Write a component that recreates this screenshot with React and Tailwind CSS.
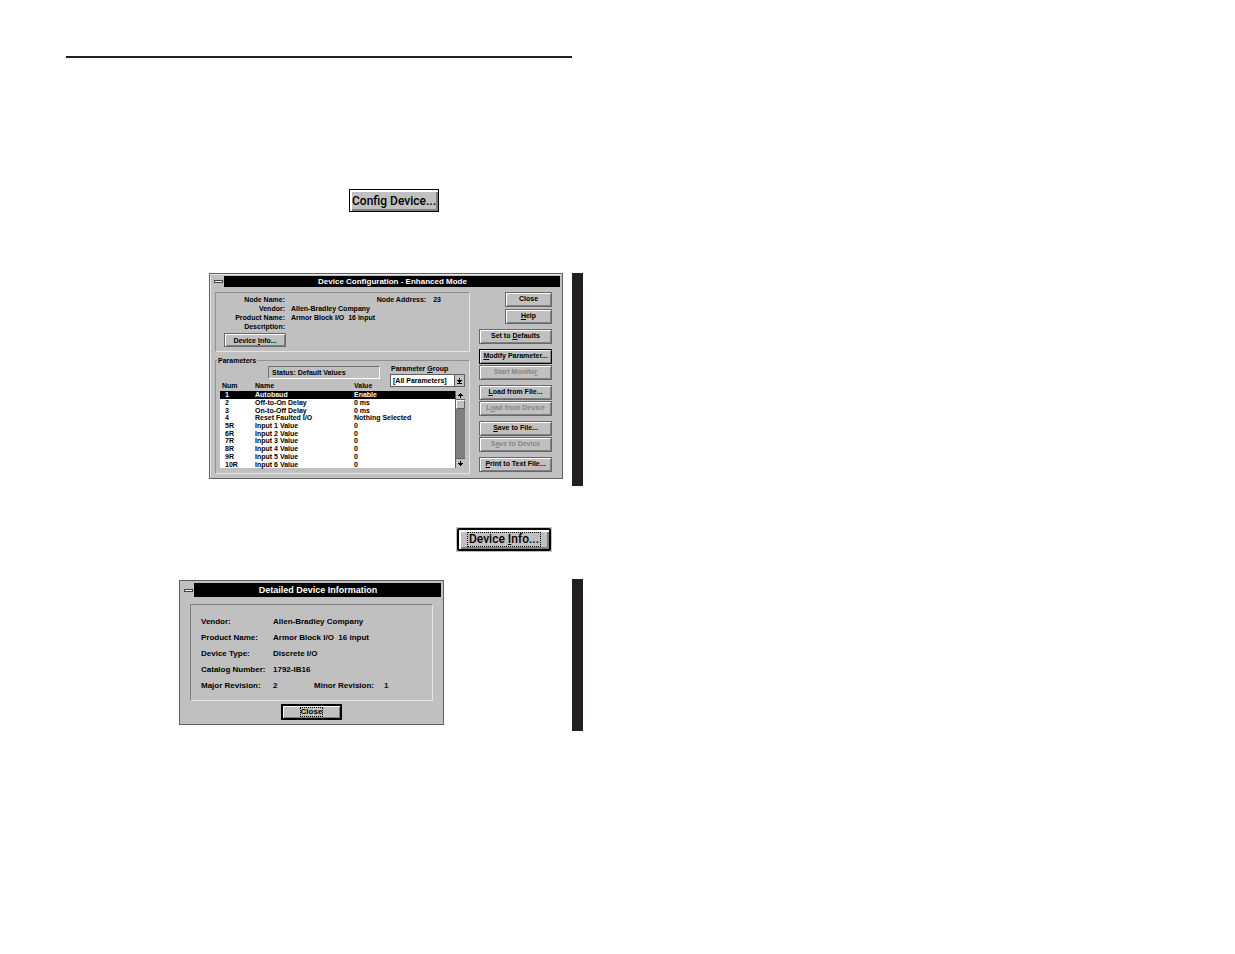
import React from 'react';
import clsx from 'clsx';

const PARAMETERS = [
    { num: '1', name: 'Autobaud', value: 'Enable' },
    { num: '2', name: 'Off-to-On Delay', value: '0 ms' },
    { num: '3', name: 'On-to-Off Delay', value: '0 ms' },
    { num: '4', name: 'Reset Faulted I/O', value: 'Nothing Selected' },
    { num: '5R', name: 'Input 1 Value', value: '0' },
    { num: '6R', name: 'Input 2 Value', value: '0' },
    { num: '7R', name: 'Input 3 Value', value: '0' },
    { num: '8R', name: 'Input 4 Value', value: '0' },
    { num: '9R', name: 'Input 5 Value', value: '0' },
    { num: '10R', name: 'Input 6 Value', value: '0' },
];

const DETAILS = [
    ['Vendor:', 'Allen-Bradley Company'],
    ['Product Name:', 'Armor Block I/O  16 input'],
    ['Device Type:', 'Discrete I/O'],
    ['Catalog Number:', '1792-IB16'],
];

function Arrow({ up, bar }) {
    return (
        <svg viewBox="0 0 7 7" className={clsx('size-[7px]', up && 'rotate-180')} shapeRendering="crispEdges" aria-hidden="true">
            <path d="M3 1h1v2h2v1h-1v1h-1v1h-1v-1h-1v-1h-1v-1h2z" />
            {bar && <path d="M1 6h5v1h-5z" />}
        </svg>
    );
}

function PushButton({ children, className, disabled, isDefault }) {
    return (
        <button
            type="button"
            disabled={disabled}
            className={clsx(
                'flex items-center justify-center whitespace-nowrap border bg-[#c0c0c0] shadow-[inset_1px_1px_0_#fff,inset_-1px_-1px_0_#808080]',
                isDefault ? 'border-black' : 'border-[#686868]',
                disabled && 'text-[#868686]',
                className
            )}
        >
            <span>{children}</span>
        </button>
    );
}

function SideButton(props) {
    return <PushButton {...props} className={clsx('h-[15px] w-full', props.className)} />;
}

function TitleBar({ children, className }) {
    return (
        <div className={clsx('flex items-stretch', className)}>
            <button type="button" aria-label="Control menu" className="flex w-[13px] items-center justify-center border-r border-black bg-[#c0c0c0]">
                <span className="h-[3px] w-[9px] border border-[#404040] bg-white" />
            </button>
            <h2 className="flex-1 bg-black text-center text-white">{children}</h2>
        </div>
    );
}

function DeviceSummary() {
    return (
        <section className="flex h-[60px] flex-col border border-[#909090] border-r-[#e4e4e4] border-b-[#e4e4e4] pt-[2px] pl-[8px] leading-[9px]">
            <div className="flex">
                <dl className="grid grid-cols-[61px_1fr] gap-x-[6px] whitespace-pre">
                    <dt className="text-right">Node Name:</dt>
                    <dd />
                    <dt className="text-right">Vendor:</dt>
                    <dd>Allen-Bradley Company</dd>
                    <dt className="text-right">Product Name:</dt>
                    <dd>{'Armor Block I/O  16 input'}</dd>
                    <dt className="text-right">Description:</dt>
                    <dd />
                </dl>
                <dl className="ml-auto flex gap-[7px] pr-[28px]">
                    <dt>Node Address:</dt>
                    <dd>23</dd>
                </dl>
            </div>
            <PushButton className="mt-[2px] h-[14px] w-[62px]">
                Device <u>I</u>nfo...
            </PushButton>
        </section>
    );
}

function ParameterList() {
    return (
        <div className="flex items-end">
            <table className="h-[88px] flex-1 border-collapse text-left leading-[7px]">
                <thead>
                    <tr className="h-[11px] align-middle">
                        <th className="w-[35px] pl-[2px]">Num</th>
                        <th className="w-[99px]">Name</th>
                        <th>Value</th>
                    </tr>
                </thead>
                <tbody className="bg-white">
                    {PARAMETERS.map((param, i) => (
                        <tr key={param.num} className={clsx(i === 0 && 'bg-black text-white')}>
                            <td className="pl-[5px]">{param.num}</td>
                            <td>{param.name}</td>
                            <td>{param.value}</td>
                        </tr>
                    ))}
                </tbody>
            </table>
            <div className="flex h-[77px] w-[10px] flex-col border-l border-[#606060] bg-[#808080]">
                <button type="button" aria-label="Scroll up" className="flex h-[9px] items-center justify-center border-b border-[#606060] bg-[#c0c0c0]">
                    <Arrow up />
                </button>
                <span className="h-[9px] border border-[#606060] border-t-white border-l-white bg-[#c0c0c0]" />
                <button type="button" aria-label="Scroll down" className="mt-auto flex h-[10px] items-center justify-center border-t border-[#606060] bg-[#c0c0c0]">
                    <Arrow />
                </button>
            </div>
        </div>
    );
}

function ParametersPanel() {
    return (
        <fieldset className="mt-[4px] h-[118px] min-w-0 border border-[#909090] border-r-[#e4e4e4] border-b-[#e4e4e4] px-[4px]">
            <legend className="-ml-[3px] px-px leading-[9px]">Parameters</legend>
            <div className="flex h-[15px] items-start justify-between pl-[48px]">
                <output className="mt-px h-[13px] w-[112px] border border-[#707070] border-r-white border-b-white pl-[3px] leading-[12px]">
                    Status: Default Values
                </output>
                <div className="w-[75px] leading-[8px]">
                    <label htmlFor="parameter-group" className="block pl-px">
                        Parameter <u>G</u>roup
                    </label>
                    <div className="mt-px flex h-[13px] border border-[#606060] bg-white">
                        <select id="parameter-group" className="min-w-0 flex-1 appearance-none bg-white pl-[2px] leading-[11px]">
                            <option>[All Parameters]</option>
                        </select>
                        <span className="flex w-[10px] items-center justify-center border-l border-[#606060] bg-[#c0c0c0]">
                            <Arrow bar />
                        </span>
                    </div>
                </div>
            </div>
            <ParameterList />
        </fieldset>
    );
}

function DeviceConfiguration() {
    return (
        <section className="w-[354px] border border-[#606060] bg-[#c0c0c0] p-[2px] text-[7px] shadow-[inset_1px_1px_0_#e8e8e8]">
            <TitleBar className="h-[11px] text-[8px] leading-[11px]">Device Configuration - Enhanced Mode</TitleBar>
            <div className="flex gap-[9px] pt-[5px] pr-[8px] pb-[2px] pl-[3px]">
                <div className="min-w-0 flex-1">
                    <DeviceSummary />
                    <ParametersPanel />
                </div>
                <div className="flex w-[73px] flex-col gap-[5px]">
                    <div className="flex flex-col gap-[2px] pl-[26px]">
                        <SideButton>Close</SideButton>
                        <SideButton>
                            <u>H</u>elp
                        </SideButton>
                    </div>
                    <SideButton>
                        Set to <u>D</u>efaults
                    </SideButton>
                    <div className="flex flex-col gap-px">
                        <SideButton isDefault>
                            <u>M</u>odify Parameter...
                        </SideButton>
                        <SideButton disabled>
                            Start Monito<u>r</u>
                        </SideButton>
                    </div>
                    <div className="flex flex-col gap-px">
                        <SideButton>
                            <u>L</u>oad from File...
                        </SideButton>
                        <SideButton disabled>
                            L<u>o</u>ad from Device
                        </SideButton>
                    </div>
                    <div className="flex flex-col gap-px">
                        <SideButton>
                            <u>S</u>ave to File...
                        </SideButton>
                        <SideButton disabled>
                            S<u>a</u>ve to Device
                        </SideButton>
                    </div>
                    <SideButton>
                        <u>P</u>rint to Text File...
                    </SideButton>
                </div>
            </div>
        </section>
    );
}

function DetailedInformation() {
    return (
        <section className="mt-px w-[265px] border border-[#606060] bg-[#c0c0c0] p-[2px] text-[8px]">
            <TitleBar className="h-[14px] text-[9px] leading-[14px]">Detailed Device Information</TitleBar>
            <div className="mx-[8px] mt-[7px] h-[97px] border border-[#808080] border-r-[#e4e4e4] border-b-[#e4e4e4] pt-[9px] pl-[10px] leading-[16px]">
                <dl className="grid grid-cols-[72px_1fr] whitespace-pre">
                    {DETAILS.map(([label, value]) => (
                        <React.Fragment key={label}>
                            <dt>{label}</dt>
                            <dd>{value}</dd>
                        </React.Fragment>
                    ))}
                </dl>
                <dl className="grid grid-cols-[72px_41px_70px_1fr]">
                    <dt>Major Revision:</dt>
                    <dd>2</dd>
                    <dt>Minor Revision:</dt>
                    <dd>1</dd>
                </dl>
            </div>
            <button
                type="button"
                className="mx-auto mt-[3px] mb-[2px] flex h-[16px] w-[61px] items-center justify-center border-2 border-black bg-[#c0c0c0] shadow-[inset_1px_1px_0_#fff,inset_-1px_-1px_0_#808080]"
            >
                <span className="border border-dotted border-black leading-[8px]">Close</span>
            </button>
        </section>
    );
}

export default function App() {
    return (
        <main className="min-h-screen bg-white font-['Liberation_Sans',Arial,sans-serif] font-bold text-black">
            <article className="w-full max-w-[583px] pt-[56px]">
                <hr className="mr-[11px] ml-[66px] h-[2px] border-0 bg-[#231f20]" />

                <div className="mt-[131px] flex justify-end pr-[144px]">
                    <button
                        type="button"
                        className="h-[23px] w-[90px] border border-black bg-[#c0c0c0] font-['Roboto',sans-serif] text-[12px] font-medium whitespace-nowrap shadow-[inset_2px_2px_0_#fff,inset_-2px_-2px_0_#808080]"
                    >
                        Config Device...
                    </button>
                </div>

                <div className="mt-[61px] flex items-stretch justify-end gap-[9px]">
                    <div className="pb-[7px]">
                        <DeviceConfiguration />
                    </div>
                    <div className="w-[11px] bg-[#231f20]" />
                </div>

                <div className="mt-[41px] flex justify-end pr-[31px]">
                    <div className="bg-[#c0c0c0] p-px">
                        <button
                            type="button"
                            className="flex h-[23px] w-[94px] items-center justify-center rounded-[2px] border-2 border-black bg-[#c0c0c0] font-['Roboto',sans-serif] text-[12px] font-medium whitespace-nowrap shadow-[inset_2px_2px_0_#fff,inset_-2px_-2px_0_#808080]"
                        >
                            <span className="border border-dotted border-black px-px leading-[13px]">
                                Device <u>I</u>nfo...
                            </span>
                        </button>
                    </div>
                </div>

                <div className="mt-[27px] flex items-stretch justify-between pl-[179px]">
                    <div className="pb-[6px]">
                        <DetailedInformation />
                    </div>
                    <div className="w-[11px] bg-[#231f20]" />
                </div>
            </article>
        </main>
    );
}
